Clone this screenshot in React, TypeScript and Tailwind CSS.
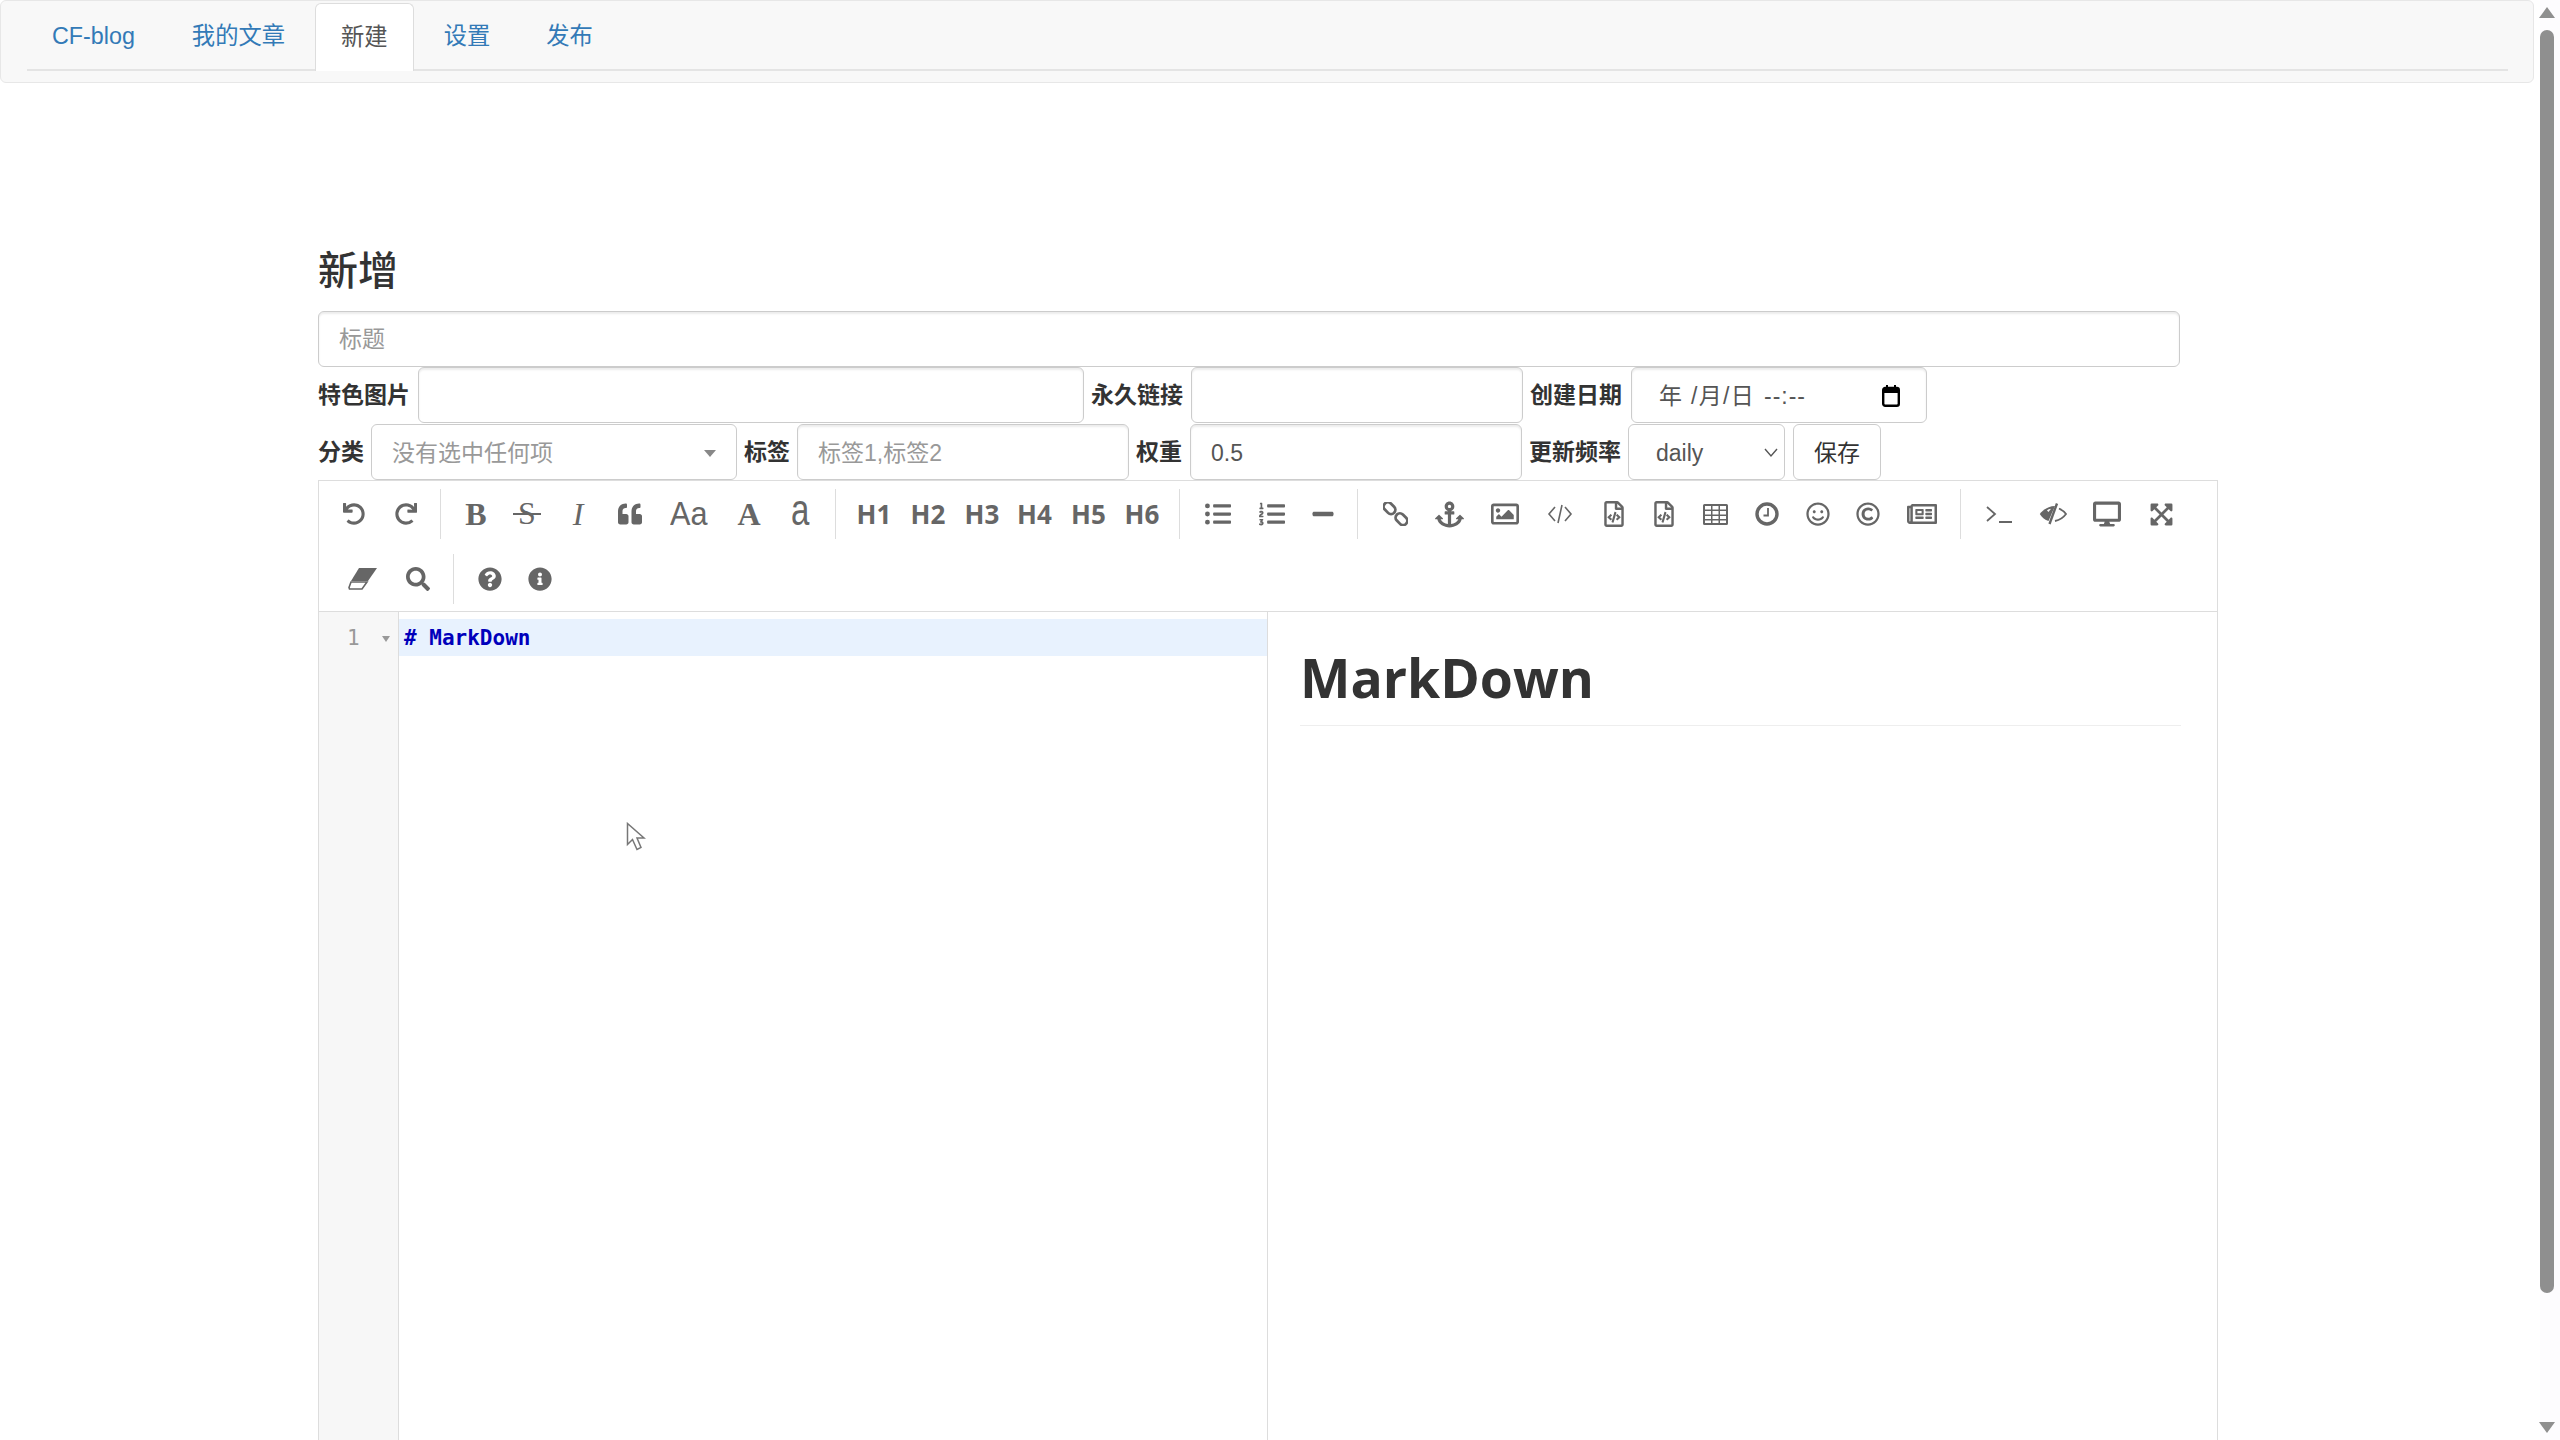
import { ReactNode } from 'react';
import {
  FaUndo, FaRedo, FaQuoteLeft, FaListUl, FaListOl, FaMinus, FaAnchor, FaRegImage,
  FaRegFileCode, FaRegSmile, FaRegCopyright, FaRegNewspaper,
  FaDesktop, FaExpandArrowsAlt, FaSearch, FaQuestionCircle, FaInfoCircle,
} from 'react-icons/fa';

const font = { fontFamily: '"Liberation Sans", "Noto Sans CJK SC", sans-serif' };

const CodeIcon = () => (
  <svg width="26" height="24" viewBox="0 0 26 24" fill="none" stroke="#666" strokeWidth="1.6">
    <path d="M8 5 2 12l6 7M18 5l6 7-6 7M15 3l-4 18" />
  </svg>
);

const TerminalIcon = () => (
  <svg width="28" height="24" viewBox="0 0 28 24" fill="none" stroke="#666" strokeWidth="1.8">
    <path d="M2 5l8 7-8 7M14 20h13" />
  </svg>
);

const EraserIcon = () => (
  <svg width="30" height="24" viewBox="0 0 30 24" fill="#666">
    <path d="M11 1h18l-9 13H3z" />
    <path d="M3 15h16l-5 7H1.500l-.5-1.500z" fill="#fff" stroke="#666" strokeWidth="1.6" />
  </svg>
);

const ChainIcon = () => (
  <svg width="25" height="24" viewBox="0 0 25 24" fill="none" stroke="#666" strokeWidth="2.800">
    <rect x="0" y="2" width="13" height="8.500" rx="4.200" transform="rotate(45 6.500 6.200)" />
    <rect x="12" y="13" width="13" height="8.500" rx="4.200" transform="rotate(45 18.500 17.200)" />
  </svg>
);

const TableIcon = () => (
  <svg width="25" height="21" viewBox="0 0 25 21" fill="#666">
    <path d="M1.5 0h22A1.5 1.5 0 0 1 25 1.500v18a1.500 1.500 0 0 1-1.500 1.500h-22A1.500 1.500 0 0 1 0 19.500v-18A1.500 1.500 0 0 1 1.500 0z" />
    <g fill="#fff">
      <rect x="2" y="2" width="6" height="3.500" /><rect x="9.500" y="2" width="6" height="3.500" /><rect x="17" y="2" width="6" height="3.500" />
      <rect x="2" y="7" width="6" height="3.500" /><rect x="9.500" y="7" width="6" height="3.500" /><rect x="17" y="7" width="6" height="3.500" />
      <rect x="2" y="12" width="6" height="3" /><rect x="9.500" y="12" width="6" height="3" /><rect x="17" y="12" width="6" height="3" />
      <rect x="2" y="16.500" width="6" height="2.500" /><rect x="9.500" y="16.500" width="6" height="2.500" /><rect x="17" y="16.500" width="6" height="2.500" />
    </g>
  </svg>
);

const ClockIcon = () => (
  <svg width="24" height="24" viewBox="0 0 24 24" fill="none" stroke="#666">
    <circle cx="12" cy="12" r="10" strokeWidth="3.400" />
    <path d="M13 6v7.500H8.500" strokeWidth="1.800" />
  </svg>
);

const EyeOffIcon = () => (
  <svg width="28" height="22" viewBox="0 0 28 22" fill="none">
    <path d="M16 3C9 3 4 7 .8 11C3 14.500 6 17 9.500 18z" fill="#666" />
    <path d="M8 7.500C9 6.500 10.500 6 12 5.800L9.500 9z" fill="#fff" />
    <path d="M18 .5 10.500 21" stroke="#666" strokeWidth="2.400" />
    <path d="M20 5.500C23 7 25.500 9 27 11C24.500 14.500 20.500 17 16 18" stroke="#666" strokeWidth="1.800" />
  </svg>
);

const CalendarIcon = () => (
  <svg className="absolute right-[26px]" width="18" height="22" viewBox="0 0 18 22" fill="none" stroke="#000">
    <rect x="1.200" y="3" width="15.600" height="17.800" rx="2" strokeWidth="2.400" />
    <path d="M1 6h16" strokeWidth="4" />
    <path d="M5 0v3M13 0v3" strokeWidth="2" />
  </svg>
);

const Sep = ({ ml }: { ml: string }) => <div className={`w-px h-[50px] bg-[#ddd] ${ml}`} />;

const Btn = ({ w, children }: { w: string; children: ReactNode }) => (
  <div className={`${w} h-[50px] flex items-center justify-center text-[#666]`}>{children}</div>
);

const Heading = ({ w, label }: { w: string; label: string }) => (
  <Btn w={w}>
    <span className="text-[26px] font-bold leading-none" style={{ fontFamily: '"Open Sans", sans-serif' }}>{label}</span>
  </Btn>
);

const Serif = ({ className, children }: { className: string; children: ReactNode }) => (
  <span className={`text-[32px] leading-none ${className}`} style={{ fontFamily: '"Liberation Serif", serif' }}>{children}</span>
);

const Field = ({ w, placeholder, value }: { w: string; placeholder?: string; value?: string }) => (
  <input
    readOnly
    placeholder={placeholder}
    value={value ?? ''}
    className={`${w} h-full px-[20px] pt-[2px] border border-[#ccc] rounded-[6px] bg-white text-[23px] text-[#555] placeholder:text-[#999] shadow-[inset_0_2px_2px_rgba(0,0,0,0.075)] outline-none`}
  />
);

const Label = ({ w, ml, children }: { w: string; ml: string; children: ReactNode }) => (
  <label className={`${w} ${ml} text-[23px] font-bold text-[#333] whitespace-nowrap`}>{children}</label>
);

export default function App() {
  return (
    <div className="relative h-screen w-full flex overflow-hidden bg-white" style={font}>
      <div className="w-[2540px] flex flex-col">
        {/* Nav */}
        <nav className="w-[2534px] h-[83px] shrink-0 border border-[#e7e7e7] rounded-[6px] bg-[#f8f8f8] pl-[26px] pr-[25px]">
          <ul className="h-[70px] flex items-end gap-[6px] border-b-2 border-[#e4e4e4] text-[23.3px] text-[#337ab7]">
            <li className="px-[25px] h-[68px] pt-[2px] flex items-center">CF-blog</li>
            <li className="pl-[26px] pr-[24px] h-[68px] pt-[2px] flex items-center">我的文章</li>
            <li className="px-[25px] h-[68px] flex items-center bg-white text-[#555] border border-[#ddd] border-b-0 rounded-t-[6px] -mb-[2px]">新建</li>
            <li className="pl-[24px] pr-[25px] h-[68px] pt-[2px] flex items-center">设置</li>
            <li className="px-[25px] h-[68px] pt-[2px] flex items-center">发布</li>
          </ul>
        </nav>

        <main className="flex-1 min-h-0 flex flex-col pl-[318px]">
          <h2 className="mt-[163px] mb-[15px] h-[50px] leading-[50px] text-[40px] font-medium text-[#333]">新增</h2>

          <input
            readOnly
            placeholder="标题"
            className="w-[1862px] h-[56px] shrink-0 px-[20px] border border-[#ccc] rounded-[6px] bg-white text-[23px] placeholder:text-[#999] shadow-[inset_0_2px_2px_rgba(0,0,0,0.075)] outline-none"
          />

          <div className="h-[56px] shrink-0 flex items-center">
            <Label w="w-[100px]" ml="ml-0">特色图片</Label>
            <Field w="w-[666px]" />
            <Label w="w-[100px]" ml="ml-[7px]">永久链接</Label>
            <Field w="w-[332px]" />
            <Label w="w-[101px]" ml="ml-[7px]">创建日期</Label>
            <div className="relative w-[296px] h-full pt-[2px] border border-[#ccc] rounded-[6px] flex items-center pl-[27px] text-[23px] text-[#555] whitespace-pre shadow-[inset_0_2px_2px_rgba(0,0,0,0.075)]">
              <span className="tracking-[1.3px]">年 /月/日</span>
              <span className="ml-[9px] tracking-[1px]">--:--</span>
              <CalendarIcon />
            </div>
          </div>

          <div className="h-[56px] mt-px shrink-0 flex items-center">
            <Label w="w-[53px]" ml="ml-0">分类</Label>
            <div className="w-[366px] h-full pt-[2px] border border-[#ccc] rounded-[6px] flex items-center justify-between pl-[20px] pr-[20px] text-[23px] text-[#999]">
              没有选中任何项
              <span className="w-0 h-0 border-x-[6px] border-x-transparent border-t-[7px] border-t-[#888]" />
            </div>
            <Label w="w-[53px]" ml="ml-[7px]">标签</Label>
            <Field w="w-[332px]" placeholder="标签1,标签2" />
            <Label w="w-[54px]" ml="ml-[7px]">权重</Label>
            <Field w="w-[332px]" value="0.5" />
            <Label w="w-[99px]" ml="ml-[7px]">更新频率</Label>
            <div className="w-[157px] h-full pt-[2px] border border-[#ccc] rounded-[6px] flex items-center justify-between pl-[27px] pr-[5px] text-[23px] text-[#555]">
              daily
              <svg width="16" height="10" viewBox="0 0 16 10" fill="none" stroke="#555" strokeWidth="1.4"><path d="M2 1l6 7 6-7" /></svg>
            </div>
            <button className="w-[88px] h-full pt-[2px] ml-[8px] border border-[#ccc] rounded-[6px] bg-white text-[23px] text-[#333]">保存</button>
          </div>

          {/* Editor */}
          <section className="w-[1900px] flex-1 min-h-0 flex flex-col border border-b-0 border-[#ddd]">
            <div className="h-[131px] shrink-0 pt-[8px] pl-[9px] border-b border-[#ddd] flex flex-col gap-[15px]">
              <div className="flex items-center">
                <Btn w="w-[52px]"><FaUndo size={22} /></Btn>
                <Btn w="w-[51px]"><FaRedo size={22} /></Btn>
                <Sep ml="ml-[9px]" />
                <div className="w-[9px]" />
                <Btn w="w-[52px]"><Serif className="font-bold">B</Serif></Btn>
                <Btn w="w-[50px]">
                  <span className="relative">
                    <Serif className="">S</Serif>
                    <span className="absolute left-[-5px] right-[-5px] top-[16px] h-[2px] bg-[#666]" />
                  </span>
                </Btn>
                <Btn w="w-[52px]"><Serif className="italic">I</Serif></Btn>
                <Btn w="w-[52px]"><FaQuoteLeft size={24} /></Btn>
                <Btn w="w-[66px]"><span className="text-[34px] leading-none -mt-[3px] scale-x-90">Aa</span></Btn>
                <Btn w="w-[54px]"><Serif className="font-bold">A</Serif></Btn>
                <Btn w="w-[48px]"><span className="text-[44px] leading-none -mt-[8px] scale-x-75">a</span></Btn>
                <Sep ml="ml-[11px]" />
                <div className="w-[12px]" />
                <Heading w="w-[52px]" label="H1" />
                <Heading w="w-[56px]" label="H2" />
                <Heading w="w-[52px]" label="H3" />
                <Heading w="w-[53px]" label="H4" />
                <Heading w="w-[55px]" label="H5" />
                <Heading w="w-[52px]" label="H6" />
                <Sep ml="ml-[11px]" />
                <div className="w-[12px]" />
                <Btn w="w-[51px]"><FaListUl size={26} /></Btn>
                <Btn w="w-[57px]"><FaListOl size={26} /></Btn>
                <Btn w="w-[46px]"><FaMinus size={24} /></Btn>
                <Sep ml="ml-[11px]" />
                <div className="w-[12px]" />
                <Btn w="w-[50px]"><ChainIcon /></Btn>
                <Btn w="w-[58px]"><FaAnchor size={29} /></Btn>
                <Btn w="w-[53px]"><FaRegImage size={28} /></Btn>
                <Btn w="w-[58px]"><CodeIcon /></Btn>
                <Btn w="w-[49px]"><FaRegFileCode size={26} /></Btn>
                <Btn w="w-[52px]"><FaRegFileCode size={26} /></Btn>
                <Btn w="w-[51px]"><TableIcon /></Btn>
                <Btn w="w-[51px]"><ClockIcon /></Btn>
                <Btn w="w-[51px]"><FaRegSmile size={24} /></Btn>
                <Btn w="w-[50px]"><FaRegCopyright size={24} /></Btn>
                <Btn w="w-[58px]"><FaRegNewspaper size={30} /></Btn>
                <Sep ml="ml-[9px]" />
                <div className="w-[11px]" />
                <Btn w="w-[53px]"><TerminalIcon /></Btn>
                <Btn w="w-[55px]"><EyeOffIcon /></Btn>
                <Btn w="w-[54px]"><FaDesktop size={28} /></Btn>
                <Btn w="w-[54px]"><FaExpandArrowsAlt size={25} /></Btn>
              </div>
              <div className="flex items-center">
                <Btn w="w-[70px]"><EraserIcon /></Btn>
                <Btn w="w-[40px]"><FaSearch size={24} /></Btn>
                <Sep ml="ml-[15px]" />
                <Btn w="w-[72px]"><FaQuestionCircle size={24} /></Btn>
                <Btn w="w-[28px]"><FaInfoCircle size={24} /></Btn>
              </div>
            </div>

            <div className="flex-1 min-h-0 flex">
              <div className="w-[80px] shrink-0 bg-[#f7f7f7] border-r border-[#ddd] pt-[7px]">
                <div className="h-[37px] pt-[2px] flex items-center text-[21px] text-[#999] pl-[28px]" style={{ fontFamily: '"DejaVu Sans Mono", monospace' }}>
                  1
                  <span className="ml-[22px] w-0 h-0 border-x-[4px] border-x-transparent border-t-[6px] border-t-[#999]" />
                </div>
              </div>
              <div className="w-[869px] shrink-0 border-r border-[#ddd] pt-[7px]">
                <div
                  className="h-[37px] pt-[2px] bg-[#e8f2fe] pl-[5px] flex items-center text-[21px] font-bold text-[#0000bb] whitespace-pre"
                  style={{ fontFamily: '"DejaVu Sans Mono", monospace' }}
                >
                  # MarkDown
                </div>
              </div>
              <div className="flex-1 pl-[32px] pr-[36px] pt-[28px]">
                <h1
                  className="h-[86px] border-b border-[#eee] text-[53.5px] leading-[75px] font-bold text-[#333]"
                  style={{ fontFamily: '"Open Sans", sans-serif' }}
                >
                  MarkDown
                </h1>
              </div>
            </div>
          </section>
        </main>
      </div>

      {/* Scrollbar */}
      <div className="w-[20px] h-full bg-[#fdfcfe] flex flex-col items-center pr-[6px] pt-[7px] pb-[7px]">
        <span className="w-0 h-0 border-x-[8px] border-x-transparent border-b-[11px] border-b-[#8f8f8f]" />
        <div className="w-[14px] h-[1263px] mt-[12px] rounded-full bg-[#8f8f8f]" />
        <span className="mt-auto w-0 h-0 border-x-[8px] border-x-transparent border-t-[11px] border-t-[#8f8f8f]" />
      </div>

      {/* Mouse pointer */}
      <svg className="absolute left-[626px] top-[822px]" width="20" height="29" viewBox="0 0 20 29" fill="#fff" stroke="#777" strokeWidth="1.500">
        <path d="M1.500 1.500v21l5-5 4.500 10 4-2-4-9.500h7z" />
      </svg>
    </div>
  );
}
